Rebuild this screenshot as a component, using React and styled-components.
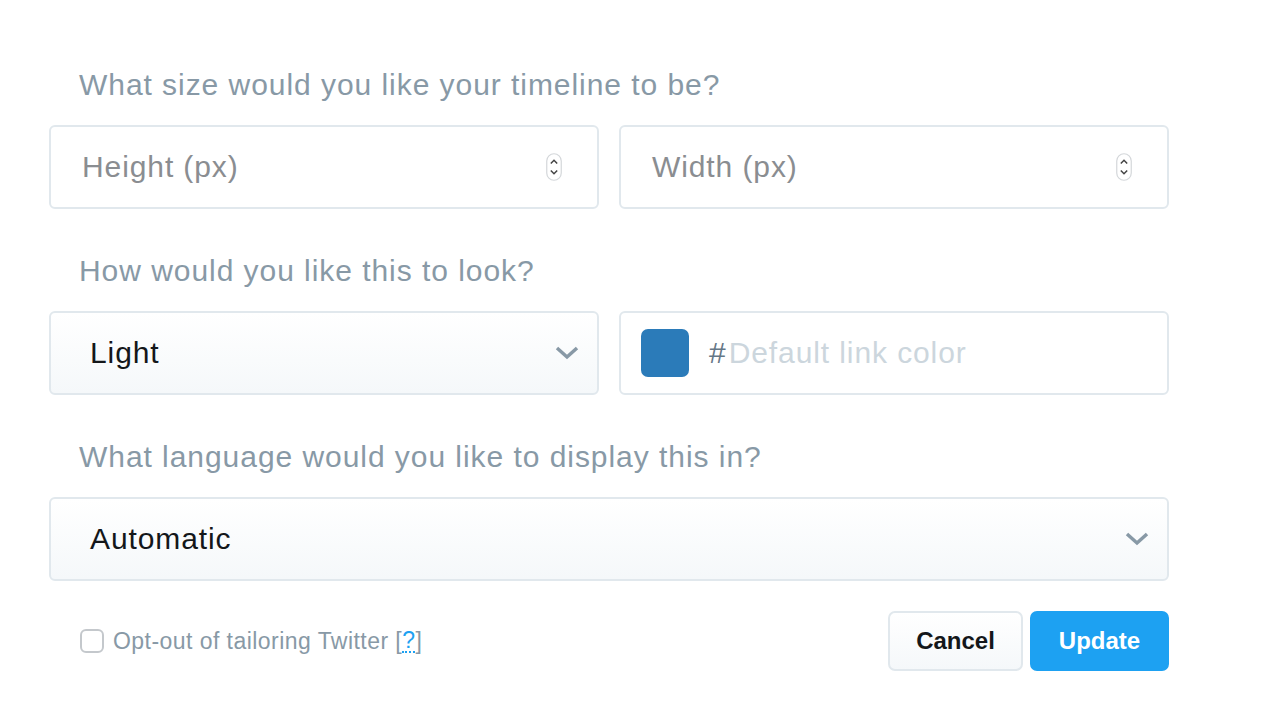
import React from "react";
import styled, { createGlobalStyle } from "styled-components";

const Global = createGlobalStyle`
  body {
    margin: 0;
    background: #fff;
    font-family: "Liberation Sans", Arial, sans-serif;
  }
`;

const Form = styled.form`
  width: 1120px;
  padding: 65px 0 0 49px;
`;

const Label = styled.div`
  height: 40px;
  line-height: 40px;
  padding-left: 30px;
  margin: ${p => (p.first ? "0" : "42px")} 0 20px;
  font-size: 30px;
  letter-spacing: 0.95px;
  color: #8899a6;
`;

const Row = styled.div`
  display: grid;
  grid-template-columns: ${p => (p.single ? "1fr" : "1fr 1fr")};
  gap: 20px;
`;

const Box = styled.div`
  box-sizing: border-box;
  height: 84px;
  border: 2px solid #e1e8ed;
  border-radius: 6px;
  display: flex;
  align-items: center;
  padding: 0 ${p => p.pr || 35}px 0 ${p => p.pl || 31}px;
  background: ${p =>
    p.select ? "linear-gradient(#fff, #f5f8fa)" : "#fff"};
`;

const Placeholder = styled.span`
  flex: 1;
  font-size: 30px;
  letter-spacing: 0.9px;
  color: ${p => p.light ? "#ccd6dd" : "#8a8d91"};
`;

const Value = styled.span`
  flex: 1;
  font-size: 30px;
  letter-spacing: 0.9px;
  color: #14171a;
`;

const Swatch = styled.div`
  width: 48px;
  height: 48px;
  border-radius: 7px;
  background: #2b7bb9;
  margin-right: 20px;
`;

const Hash = styled.span`
  font-size: 30px;
  color: #657786;
  margin-right: 3px;
`;

const Footer = styled.div`
  display: flex;
  align-items: center;
  margin-top: 30px;
`;

const Check = styled.label`
  flex: 1;
  display: flex;
  align-items: center;
  padding-left: 31px;
  font-size: 23px;
  letter-spacing: 0.45px;
  color: #8899a6;
`;

const Tick = styled.span`
  box-sizing: border-box;
  width: 24px;
  height: 24px;
  border: 2px solid #c4c8cc;
  border-radius: 6px;
  margin-right: 9px;
`;

const Help = styled.span`
  color: #1da1f2;
  border-bottom: 2px dotted #1da1f2;
  line-height: 22px;
`;

const Button = styled.button`
  box-sizing: border-box;
  height: 60px;
  width: ${p => (p.primary ? 139 : 135)}px;
  padding: 0;
  margin-left: ${p => (p.primary ? 7 : 0)}px;
  border-radius: 7px;
  font-family: inherit;
  font-size: 24px;
  font-weight: bold;
  border: 2px solid ${p => (p.primary ? "#1da1f2" : "#e1e8ed")};
  color: ${p => (p.primary ? "#fff" : "#14171a")};
  background: ${p =>
    p.primary ? "#1da1f2" : "linear-gradient(#fff, #f5f8fa)"};
`;

const Stepper = () => (
  <svg width="16" height="28" viewBox="0 0 16 28">
    <rect x="0.75" y="0.75" width="14.5" height="26.5" rx="7.25" fill="#fff" stroke="#d4d7da" strokeWidth="1.2" />
    <path d="M4.8 10.5 L8 7.3 L11.2 10.5" fill="none" stroke="#444" strokeWidth="1.5" />
    <path d="M4.8 17.5 L8 20.7 L11.2 17.5" fill="none" stroke="#444" strokeWidth="1.5" />
  </svg>
);

const Chevron = () => (
  <svg width="24" height="14" viewBox="0 0 24 14">
    <path d="M2 2 L12 11 L22 2" fill="none" stroke="#8899a6" strokeWidth="3.5" />
  </svg>
);

export default () => (
  <>
    <Global />
    <Form>
      <Label first>What size would you like your timeline to be?</Label>
      <Row>
        <Box>
          <Placeholder>Height (px)</Placeholder>
          <Stepper />
        </Box>
        <Box>
          <Placeholder>Width (px)</Placeholder>
          <Stepper />
        </Box>
      </Row>

      <Label>How would you like this to look?</Label>
      <Row>
        <Box select pl={39} pr={18}>
          <Value>Light</Value>
          <Chevron />
        </Box>
        <Box pl={20}>
          <Swatch />
          <Hash>#</Hash>
          <Placeholder light>Default link color</Placeholder>
        </Box>
      </Row>

      <Label>What language would you like to display this in?</Label>
      <Row single>
        <Box select pl={39} pr={18}>
          <Value>Automatic</Value>
          <Chevron />
        </Box>
      </Row>

      <Footer>
        <Check>
          <Tick />
          Opt-out of tailoring Twitter [<Help>?</Help>]
        </Check>
        <Button type="button">Cancel</Button>
        <Button type="button" primary>Update</Button>
      </Footer>
    </Form>
  </>
);
